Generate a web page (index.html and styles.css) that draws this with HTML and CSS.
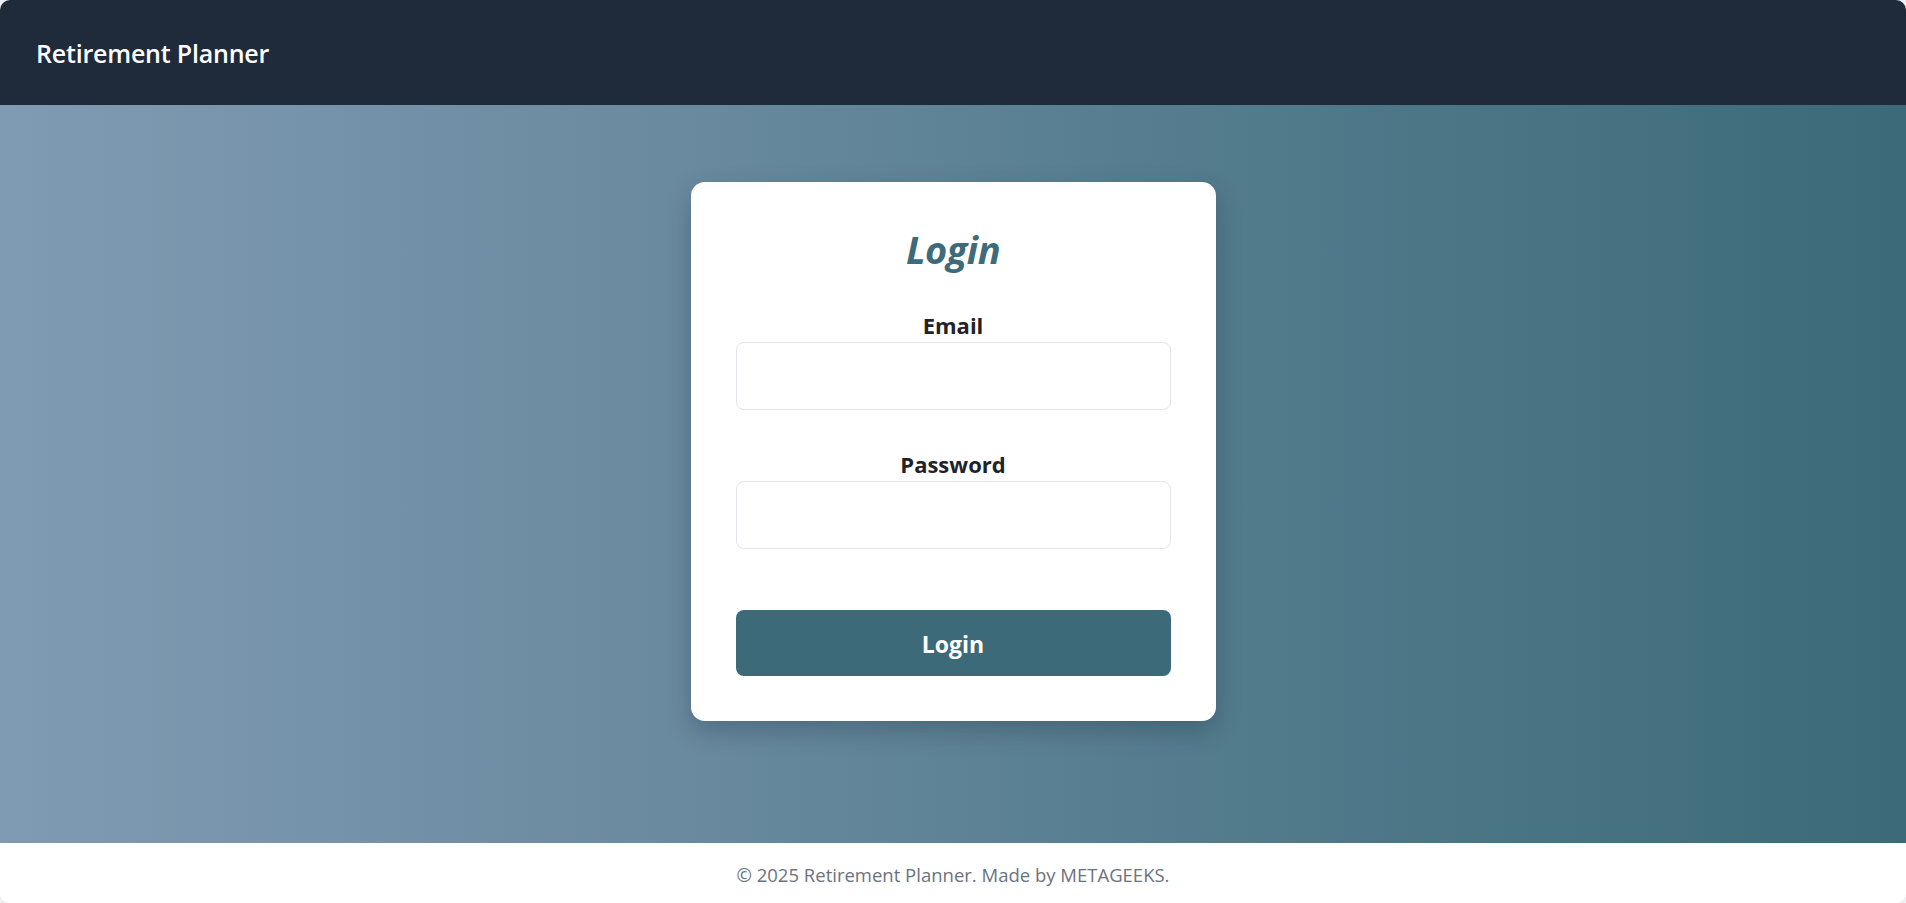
FILE: index.html
```html
<!DOCTYPE html>
<html lang="en">
<head>
<meta charset="utf-8">
<title>Retirement Planner</title>
<link rel="stylesheet" href="styles.css">
</head>
<body>
<div class="app">
  <header class="topbar">
    <h1 class="brand">Retirement Planner</h1>
  </header>
  <main class="main">
    <section class="card">
      <h2 class="card-title">Login</h2>
      <form class="form">
        <div class="field">
          <label class="field-label" for="email">Email</label>
          <input class="field-input" id="email" type="email">
        </div>
        <div class="field field-second">
          <label class="field-label" for="password">Password</label>
          <input class="field-input" id="password" type="password">
        </div>
        <button class="btn" type="button">Login</button>
      </form>
    </section>
  </main>
  <footer class="footer">© 2025 Retirement Planner. Made by METAGEEKS.</footer>
</div>
</body>
</html>
```

FILE: styles.css
```css
* { box-sizing: border-box; }
html, body { margin: 0; padding: 0; height: 100%; }
body {
  background: #eef0f2;
  font-family: "Open Sans", "Noto Sans", "Liberation Sans", sans-serif;
}
.app {
  height: 903px;
  display: flex;
  flex-direction: column;
  border-radius: 10px;
  overflow: hidden;
  background: #ffffff;
}
.topbar {
  height: 105px;
  flex: 0 0 105px;
  background: #1f2a3a;
  display: flex;
  align-items: center;
  padding: 0 36px;
}
.brand {
  margin: 0;
  color: #ffffff;
  font-size: 25px;
  font-weight: 600;
  letter-spacing: -0.2px;
}
.main {
  flex: 1 1 auto;
  background: linear-gradient(90deg, #7f9bb3 0%, #6a8aa0 35%, #527b8c 65%, #3c6a78 100%);
  display: flex;
  justify-content: center;
  align-items: flex-start;
  padding-top: 77px;
}
.card {
  width: 525px;
  background: #ffffff;
  border-radius: 14px;
  box-shadow: 0 10px 24px rgba(20, 40, 55, 0.28);
  padding: 43px 45px 45px;
}
.card-title {
  margin: 0;
  text-align: center;
  color: #3d6b7a;
  font-size: 38px;
  line-height: 48px;
  font-weight: 700;
  font-style: italic;
  letter-spacing: -0.5px;
}
.form {
  display: flex;
  flex-direction: column;
}
.field {
  display: flex;
  flex-direction: column;
  margin-top: 38px;
}
.field-second { margin-top: 40px; }
.field-label {
  text-align: center;
  color: #1f2329;
  font-size: 22px;
  line-height: 28px;
  font-weight: 700;
  margin-bottom: 3px;
}
.field-input {
  height: 68px;
  border: 1px solid #e2e4e8;
  border-radius: 8px;
  background: #ffffff;
  font-size: 20px;
  padding: 0 16px;
  outline: none;
}
.btn {
  margin-top: 61px;
  height: 66px;
  border: none;
  border-radius: 8px;
  background: #3c6a78;
  color: #ffffff;
  font-family: inherit;
  font-size: 23px;
  font-weight: 700;
  padding-top: 3px;
  cursor: pointer;
}
.footer {
  flex: 0 0 60px;
  height: 60px;
  background: #ffffff;
  display: flex;
  align-items: center;
  justify-content: center;
  color: #6b7280;
  font-size: 18.5px;
  padding-top: 3px;
}
```
